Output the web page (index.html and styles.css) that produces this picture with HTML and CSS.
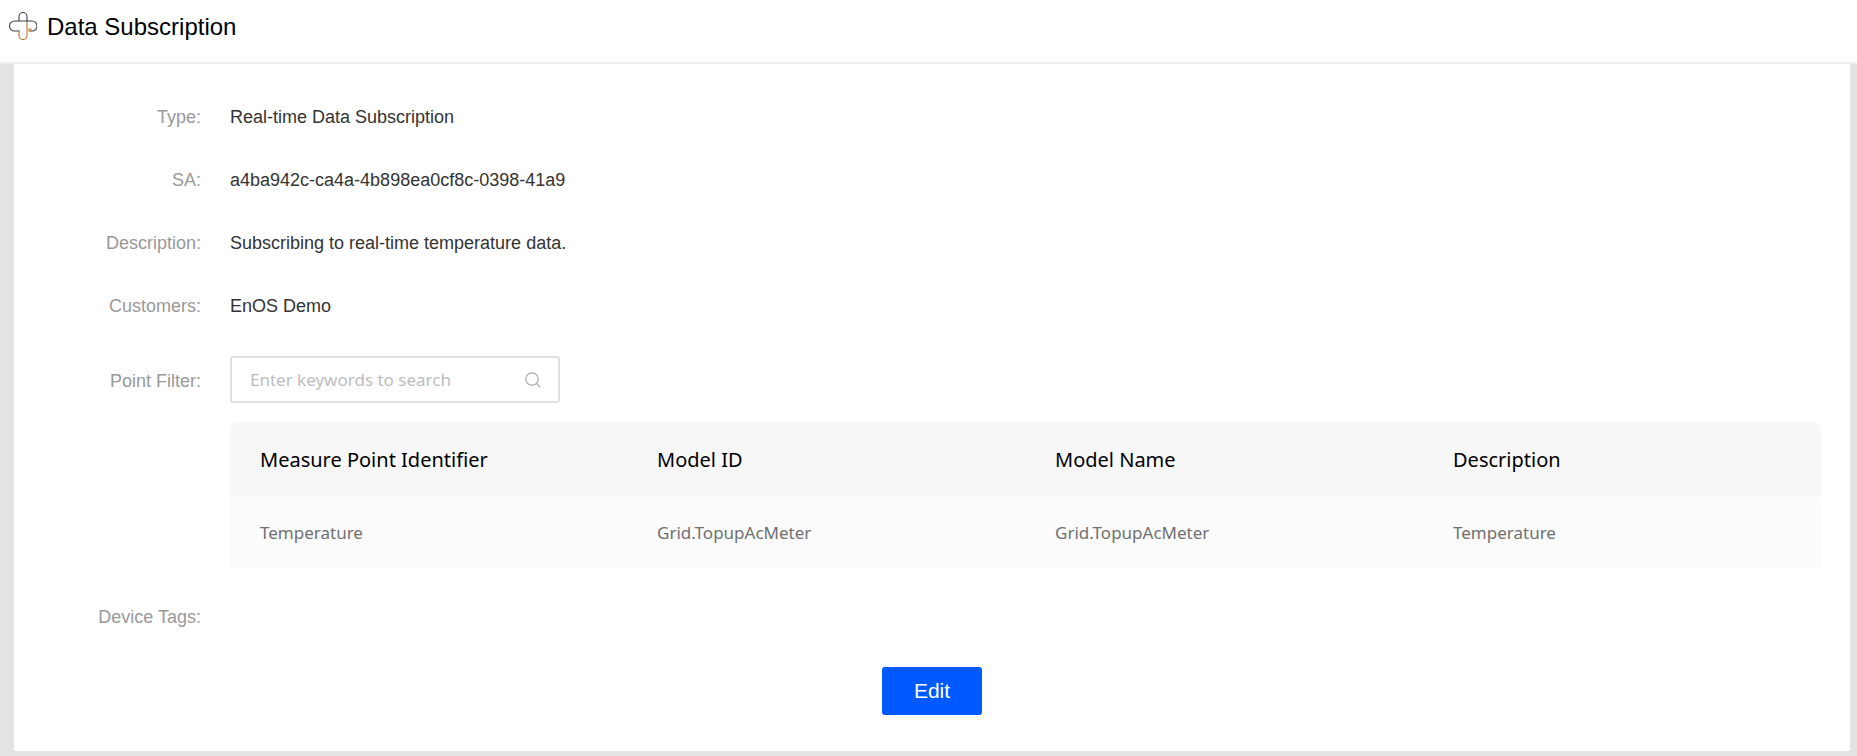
FILE: index.html
```html
<!DOCTYPE html>
<html lang="en">
<head>
<meta charset="utf-8">
<title>Data Subscription</title>
<link rel="stylesheet" href="styles.css">
</head>
<body>
<header class="topbar">
  <svg class="logo" width="28" height="28" viewBox="0 0 28 28" fill="none">
    <path class="logo-dark" d="M10 9V4.500a4 4 0 0 1 8 0V9" />
    <path class="logo-warm" d="M18 9V23.500a4 4 0 0 1-8 0V19" />
    <path class="logo-dark" d="M10 19H5.500a5 5 0 0 1 0-10H23a5 5 0 0 1 0 10h-1" />
    <circle class="logo-warm" cx="21" cy="18" r="1.300" />
  </svg>
  <h1 class="title">Data Subscription</h1>
</header>
<main class="panel">
  <div class="row row-text">
    <div class="label">Type:</div>
    <div class="value">Real-time Data Subscription</div>
  </div>
  <div class="row row-text">
    <div class="label">SA:</div>
    <div class="value">a4ba942c-ca4a-4b898ea0cf8c-0398-41a9</div>
  </div>
  <div class="row row-text">
    <div class="label">Description:</div>
    <div class="value">Subscribing to real-time temperature data.</div>
  </div>
  <div class="row row-text">
    <div class="label">Customers:</div>
    <div class="value">EnOS Demo</div>
  </div>
  <div class="row row-filter">
    <div class="label label-filter">Point Filter:</div>
    <div class="filter-body">
      <div class="search">
        <input class="search-input" type="text" placeholder="Enter keywords to search">
        <svg class="search-icon" width="18" height="18" viewBox="0 0 18 18" fill="none">
          <circle cx="8" cy="8" r="6.200" />
          <path d="M12.600 12.600L16 16" />
        </svg>
      </div>
      <table class="points">
        <thead>
          <tr>
            <th>Measure Point Identifier</th>
            <th>Model ID</th>
            <th>Model Name</th>
            <th>Description</th>
          </tr>
        </thead>
        <tbody>
          <tr>
            <td>Temperature</td>
            <td>Grid.TopupAcMeter</td>
            <td>Grid.TopupAcMeter</td>
            <td>Temperature</td>
          </tr>
        </tbody>
      </table>
    </div>
  </div>
  <div class="row row-tags">
    <div class="label">Device Tags:</div>
    <div class="value"></div>
  </div>
  <div class="actions">
    <button class="edit" type="button">Edit</button>
  </div>
</main>
</body>
</html>
```
FILE: styles.css
```css
* {
  box-sizing: border-box;
}

html,
body {
  margin: 0;
  height: 756px;
  overflow: hidden;
}

body {
  background: #e3e3e3;
  font-family: "Liberation Sans", Arial, sans-serif;
  display: flex;
  flex-direction: column;
}

.topbar {
  flex: none;
  height: 64px;
  background: #fff;
  border-bottom: 2px solid #eeeeee;
  display: flex;
  align-items: center;
  padding-left: 9px;
  padding-bottom: 8px;
}

.logo {
  flex: none;
  margin-right: 10px;
  margin-bottom: 3px;
}

.logo path,
.logo circle {
  stroke-width: 1.100;
  stroke-linecap: round;
}

.logo-dark {
  stroke: #3c4450;
}

.logo-warm {
  stroke: #b5763c;
}

.title {
  margin: 0;
  font-size: 24px;
  font-weight: 400;
  color: #000;
  line-height: 30px;
}

.panel {
  flex: none;
  height: 687px;
  margin: 0 7px 0 14px;
  background: #fff;
  padding-top: 42px;
}

.row {
  display: flex;
  font-size: 18px;
  line-height: 22px;
}

.row-text {
  margin-bottom: 41px;
}

.row-text:nth-child(4) {
  margin-bottom: 39px;
}

.label {
  flex: none;
  width: 187px;
  text-align: right;
  color: #999999;
  margin-right: 29px;
}

.value {
  color: #333333;
}

.label-filter {
  padding-top: 14px;
}

.filter-body {
  flex: none;
  width: 1591px;
}

.search {
  position: relative;
  width: 330px;
  height: 47px;
}

.search-input {
  display: block;
  width: 100%;
  height: 100%;
  border: 2px solid #e0e0e0;
  border-radius: 3px;
  padding: 0 50px 0 18px;
  font-family: "Noto Sans", sans-serif;
  font-size: 17px;
  color: #333;
  outline: none;
}

.search-input::placeholder {
  color: #bdbdbd;
  opacity: 1;
}

.search-icon {
  position: absolute;
  top: 15px;
  right: 18px;
  stroke: #a8a8a8;
  stroke-width: 1.200;
}

.points {
  width: 100%;
  margin-top: 19px;
  border-collapse: separate;
  border-spacing: 0;
  table-layout: fixed;
  font-family: "Noto Sans", sans-serif;
}

.points th {
  height: 75px;
  padding: 1px 30px 0;
  background: #f7f7f7;
  text-align: left;
  font-size: 20px;
  font-weight: 400;
  color: #000;
}

.points th:first-child {
  width: 397px;
  border-top-left-radius: 8px;
}

.points th:last-child {
  border-top-right-radius: 8px;
}

.points td {
  height: 72px;
  padding: 0 30px 1px;
  background: #fbfbfb;
  font-size: 17px;
  font-weight: 400;
  color: #707070;
}

.row-tags {
  margin-top: 37px;
}

.actions {
  display: flex;
  justify-content: center;
  margin-top: 39px;
}

.edit {
  width: 100px;
  height: 48px;
  border: 0;
  border-radius: 3px;
  background: #0059ff;
  color: #fff;
  font-family: "Liberation Sans", Arial, sans-serif;
  font-size: 21px;
}
```
